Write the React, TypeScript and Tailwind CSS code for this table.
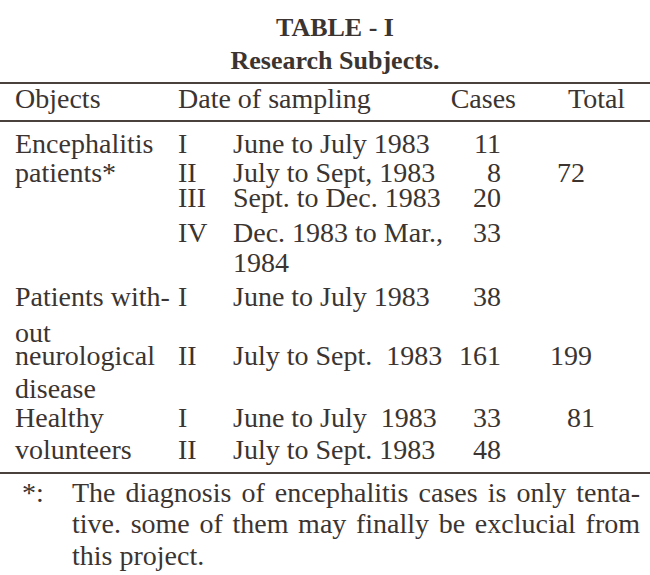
const ink = "text-[#3b3431]";

type Line = {
  h: string;
  obj?: string;
  roman?: string;
  date?: string;
  cases?: string;
  total?: string;
  totalPad?: string;
};

const lines: Line[] = [
  { h: "h-[29px]", obj: "Encephalitis", roman: "I", date: "June to July 1983", cases: "11" },
  { h: "h-[25px]", obj: "patients*", roman: "II", date: "July to Sept, 1983", cases: "8", total: "72", totalPad: "pl-[56px]" },
  { h: "h-[35px]", roman: "III", date: "Sept. to Dec. 1983", cases: "20" },
  { h: "h-[30px]", roman: "IV", date: "Dec. 1983 to Mar.,", cases: "33" },
  { h: "h-[34px]", date: "1984" },
  { h: "h-[36px]", obj: "Patients with-", roman: "I", date: "June to July 1983", cases: "38" },
  { h: "h-[23px]", obj: "out" },
  { h: "h-[33px]", obj: "neurological", roman: "II", date: "July to Sept.  1983", cases: "161", total: "199", totalPad: "pl-[49px]" },
  { h: "h-[29px]", obj: "disease" },
  { h: "h-[32px]", obj: "Healthy", roman: "I", date: "June to July  1983", cases: "33", total: "81", totalPad: "pl-[66px]" },
  { h: "h-[33px]", obj: "volunteers", roman: "II", date: "July to Sept. 1983", cases: "48" },
];

function Rule() {
  return <div className="h-[2px] w-full bg-[#4a413c]" />;
}

function Row({ line }: { line: Line }) {
  return (
    <div className={`flex items-start whitespace-pre leading-[22px] ${line.h}`}>
      <div className="w-[178px] pl-[15px]">{line.obj}</div>
      <div className="w-[55px]">{line.roman}</div>
      <div className="w-[210px]">{line.date}</div>
      <div className="w-[58px] text-right">{line.cases}</div>
      <div className={line.totalPad}>{line.total}</div>
    </div>
  );
}

export default function App() {
  return (
    <div
      className={`h-[575px] w-[650px] overflow-hidden bg-white font-['Liberation_Serif',serif] text-[28px] leading-[28px] ${ink}`}
    >
      <div className="pl-[20px] pt-[15px] text-center text-[26px] font-bold leading-[26px]">
        <div className="h-[33px]">TABLE - I</div>
        <div>Research Subjects.</div>
      </div>

      <div className="mt-[8px]">
        <Rule />
      </div>
      <div className="flex h-[36px] items-start whitespace-pre pt-[1px]">
        <div className="w-[178px] pl-[15px]">Objects</div>
        <div className="w-[265px]">Date of sampling</div>
        <div className="w-[73px] text-right">Cases</div>
        <div className="pl-[52px]">Total</div>
      </div>
      <Rule />

      <div className="pt-[11px]">
        {lines.map((line, i) => (
          <Row key={i} line={line} />
        ))}
      </div>
      <Rule />

      <div className="flex pt-[5px]">
        <div className="w-[72px] pl-[22px]">*:</div>
        <div className="w-[568px]">
          <div className="h-[31px] [text-align-last:justify]">
            The diagnosis of encephalitis cases is only tenta-
          </div>
          <div className="h-[32px] [text-align-last:justify]">
            tive. some of them may finally be exclucial from
          </div>
          <div>this project.</div>
        </div>
      </div>
    </div>
  );
}
